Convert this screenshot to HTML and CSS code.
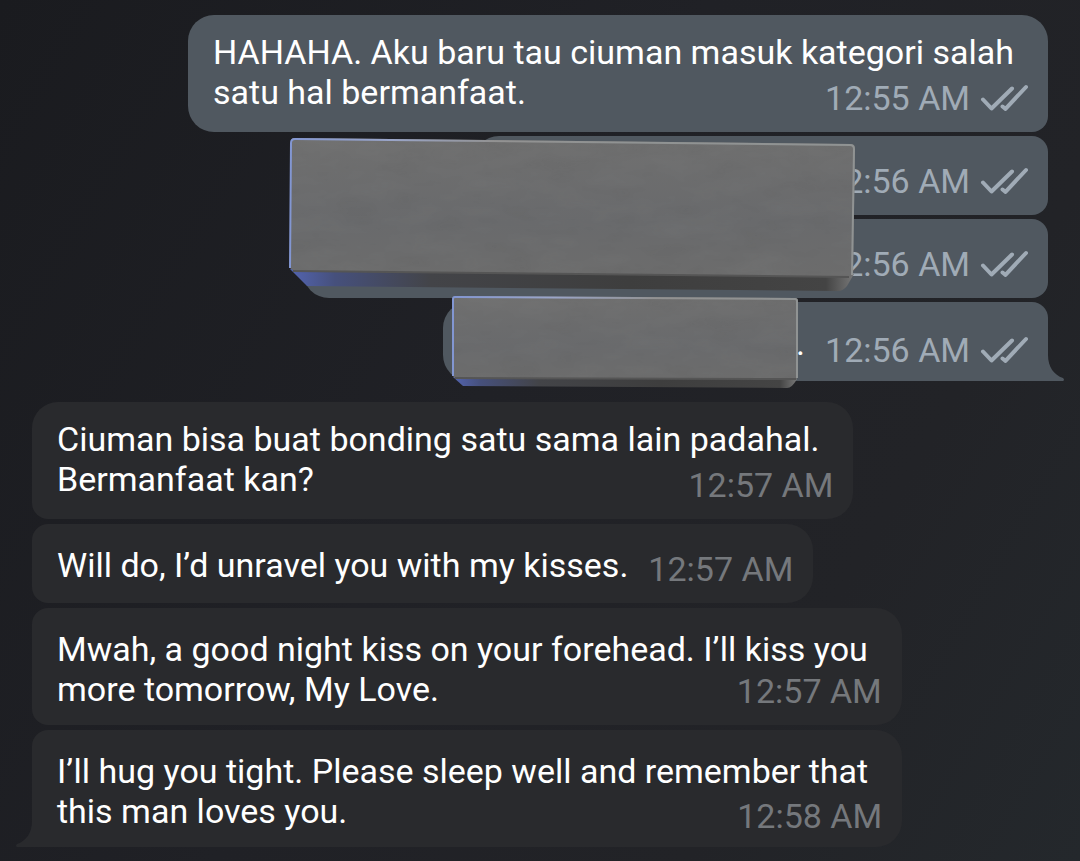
FILE: index.html
```
<!DOCTYPE html>
<html lang="id">
<head>
    <meta charset="UTF-8">
    <meta name="viewport" content="width=device-width, initial-scale=1.0">
    <title>Chat</title>
    <link rel="stylesheet" href="styles.css">
</head>
<body>
    <!-- Shared shapes -->
    <svg class="defs" width="0" height="0" aria-hidden="true">
        <defs>
            <symbol id="checks" viewBox="0 0 48 28">
                <path d="M3 15.500L11.500 24.500L32 4.500M22.500 22.500L25.500 24.800L46 3" fill="none" stroke="currentColor" stroke-width="4" stroke-linecap="round" stroke-linejoin="round"/>
            </symbol>
            <symbol id="tail" viewBox="0 0 17 26">
                <path d="M0 0C0 12 6 20 15 23Q17 25 15 26H0Z" fill="currentColor"/>
            </symbol>
            <filter id="grain" x="0" y="0" width="100%" height="100%">
                <feTurbulence type="fractalNoise" baseFrequency="0.02 0.05" numOctaves="4" seed="8"/>
                <feColorMatrix values="0 0 0 0 0.3  0 0 0 0 0.31  0 0 0 0 0.31  0.16 0 0 0 -0.03"/>
                <feComposite in2="SourceGraphic" operator="in"/>
            </filter>
            <linearGradient id="face" x1="0" y1="0" x2="0" y2="1">
                <stop offset="0" stop-color="#6d6d6d"/>
                <stop offset="0.6" stop-color="#67686a"/>
                <stop offset="1" stop-color="#6a6a6a"/>
            </linearGradient>
            <linearGradient id="side">
                <stop offset="0" stop-color="#5364b0"/>
                <stop offset="0.08" stop-color="#46507c"/>
                <stop offset="0.25" stop-color="#434448"/>
                <stop offset="0.6" stop-color="#3e3e3e"/>
                <stop offset="0.95" stop-color="#444444"/>
                <stop offset="1" stop-color="#777777"/>
            </linearGradient>
            <linearGradient id="edge" gradientUnits="userSpaceOnUse" x1="0" y1="0" x2="340" y2="0">
                <stop offset="0" stop-color="#8296d2"/>
                <stop offset="0.3" stop-color="#9aa5c8"/>
                <stop offset="0.6" stop-color="#929292"/>
                <stop offset="1" stop-color="#909393"/>
            </linearGradient>
        </defs>
    </svg>

    <main class="chat">
        <section class="group out">
            <article class="bubble first two-line">
                <p class="text">HAHAHA. Aku baru tau ciuman masuk kategori salah<br>satu hal bermanfaat.</p>
                <div class="meta"><time>12:55 AM</time><svg class="checks" aria-label="Read"><use href="#checks"/></svg></div>
            </article>
            <article class="bubble medium">
                <div class="meta"><time>12:56 AM</time><svg class="checks" aria-label="Read"><use href="#checks"/></svg></div>
            </article>
            <article class="bubble long">
                <div class="meta"><time>12:56 AM</time><svg class="checks" aria-label="Read"><use href="#checks"/></svg></div>
                <svg class="block block-large" viewBox="0 0 566 155" aria-hidden="true">
                    <path d="M1 132L18 149L549 154Q554 154 558 149L565 137Z" fill="url(#side)"/>
                    <path d="M5 1L562 7Q566 7 566 11L564 136Q564 140 560 140L5 134L1 131L2 5Q2 1 5 1Z" fill="url(#face)"/>
                    <path d="M5 1L562 7Q566 7 566 11L564 136Q564 140 560 140L5 134L1 131L2 5Q2 1 5 1Z" filter="url(#grain)"/>
                    <path d="M1 131L2 6Q2 2 6 2L561 8Q565 8 565 12L563 138" fill="none" stroke="url(#edge)" stroke-width="2"/>
                    <path d="M4 134L560 140" stroke="#555555" stroke-width="2"/>
                </svg>
            </article>
            <article class="bubble last short">
                <p class="text">.</p>
                <div class="meta"><time>12:56 AM</time><svg class="checks" aria-label="Read"><use href="#checks"/></svg></div>
                <svg class="block block-small" viewBox="0 0 346 92" aria-hidden="true">
                    <path d="M1 81L11 90L335 92Q340 92 345 83Z" fill="url(#side)"/>
                    <path d="M3 0L343 2Q346 2 346 5L345 83L3 82L0 79L1 2Q1 0 3 0Z" fill="url(#face)"/>
                    <path d="M3 0L343 2Q346 2 346 5L345 83L3 82L0 79L1 2Q1 0 3 0Z" filter="url(#grain)"/>
                    <path d="M1 80L1 3Q1 1 3 1L343 3Q345 3 345 5L345 82" fill="none" stroke="url(#edge)" stroke-width="2"/>
                    <path d="M3 82L344 83" stroke="#555555" stroke-width="2"/>
                </svg>
                <svg class="tail" aria-hidden="true"><use href="#tail"/></svg>
            </article>
        </section>

        <section class="group in">
            <article class="bubble first two-line">
                <p class="text">Ciuman bisa buat bonding satu sama lain padahal.<br>Bermanfaat kan?</p>
                <div class="meta"><time>12:57 AM</time></div>
            </article>
            <article class="bubble">
                <p class="text">Will do, I’d unravel you with my kisses.</p>
                <div class="meta"><time>12:57 AM</time></div>
            </article>
            <article class="bubble two-line">
                <p class="text">Mwah, a good night kiss on your forehead. I’ll kiss you<br>more tomorrow, My Love.</p>
                <div class="meta"><time>12:57 AM</time></div>
            </article>
            <article class="bubble last two-line">
                <p class="text">I’ll hug you tight. Please sleep well and remember that<br>this man loves you.</p>
                <div class="meta"><time>12:58 AM</time></div>
                <svg class="tail" aria-hidden="true"><use href="#tail"/></svg>
            </article>
        </section>
    </main>
</body>
</html>
```
FILE: styles.css
```
* {
    box-sizing: border-box;
}

body {
    margin: 0;
    min-height: 100vh;
    background: linear-gradient(120deg, #1a1b1f 0%, #202126 45%, #222327 75%, #24282c 100%);
    color: #fff;
    font-family: Roboto, "Liberation Sans", sans-serif;
    font-size: 34px;
    line-height: 40px;
}

.defs {
    position: absolute;
}

.chat {
    display: flex;
    flex-direction: column;
    gap: 21px;
    padding: 15px 32px 14px;
}

.group {
    display: flex;
    flex-direction: column;
    align-items: flex-start;
    gap: 5px;
}

.group.out {
    align-items: flex-end;
    gap: 4px;
}

.bubble {
    position: relative;
    display: flex;
    justify-content: flex-end;
    gap: 20px;
    max-width: 100%;
    min-height: 79px;
    padding: 21px 20px 0 25px;
    border-radius: 16px 26px 26px 16px;
    background: #292a2d;
}

.out .bubble {
    border-radius: 26px 16px 16px 26px;
    background: #505860;
}

.bubble.first {
    padding-top: 17px;
}

.in .bubble.first {
    border-top-left-radius: 26px;
}

.out .bubble.first {
    border-top-right-radius: 26px;
}

.in .bubble.last {
    border-bottom-left-radius: 0;
}

.out .bubble.last {
    border-bottom-right-radius: 0;
}

/* the time sits in the free space of the second line */
.two-line {
    display: grid;
    min-height: 117px;
}

.two-line .text,
.two-line .meta {
    grid-area: 1 / 1;
}

.two-line .text {
    padding-right: 14px;
}

.text {
    margin: 0;
}

.meta {
    display: flex;
    align-items: center;
    align-self: end;
    justify-self: end;
    gap: 10px;
    padding-bottom: 14px;
    color: #75787c;
    white-space: nowrap;
}

.last .meta {
    padding-bottom: 11px;
}

.out .meta {
    color: #a0abb6;
}

.checks {
    width: 48px;
    height: 28px;
}

.medium {
    width: 575px;
}

.long {
    width: 745px;
}

.short {
    width: 605px;
}

/* Blocks lying over the messages */
.block {
    position: absolute;
}

.block-large {
    right: 193px;
    bottom: 6px;
    width: 566px;
    height: 155px;
}

.block-small {
    right: 250px;
    top: -6px;
    width: 346px;
    height: 92px;
}

.tail {
    position: absolute;
    bottom: 0;
    width: 17px;
    height: 26px;
}

.out .tail {
    left: 100%;
    color: #505860;
}

.in .tail {
    right: 100%;
    color: #292a2d;
    transform: scaleX(-1);
}

@media (max-width: 900px) {
    body {
        font-size: 24px;
        line-height: 32px;
    }

    .chat {
        padding: 15px 20px;
    }
}
```
